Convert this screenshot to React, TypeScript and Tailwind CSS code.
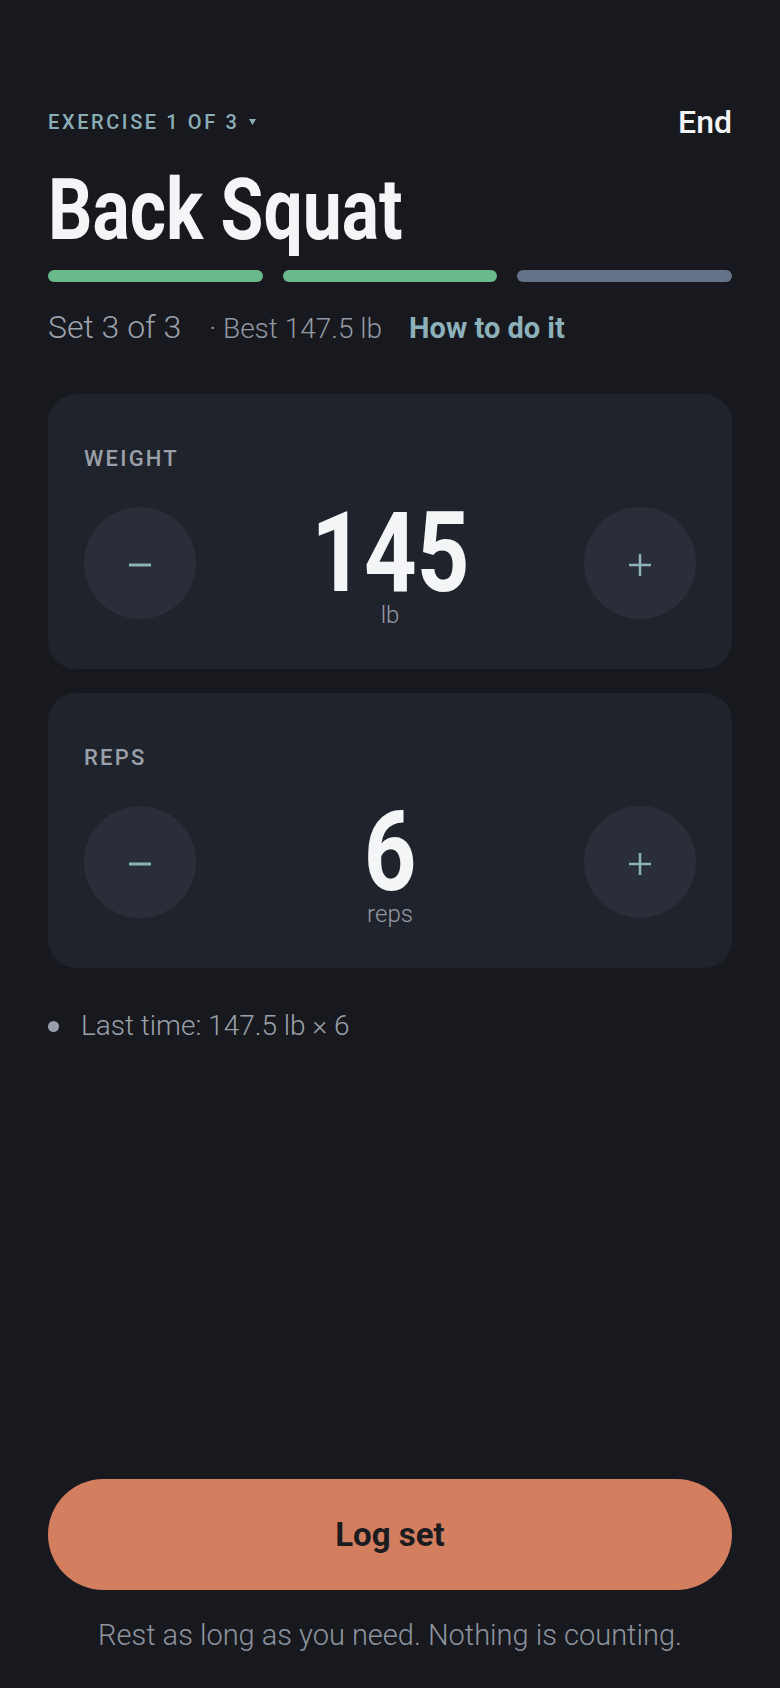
import React from 'react';

const MinusGlyph = () => (
  <svg width="22" height="22" viewBox="0 0 22 22" className="mt-1">
    <line x1="0" y1="11" x2="22" y2="11" stroke="#8db4bd" strokeWidth="3" />
  </svg>
);

const PlusGlyph = () => (
  <svg width="22" height="22" viewBox="0 0 22 22" className="mt-1">
    <line x1="0" y1="11" x2="22" y2="11" stroke="#8db4bd" strokeWidth="2.5" />
    <line x1="11" y1="0" x2="11" y2="22" stroke="#8db4bd" strokeWidth="2.5" />
  </svg>
);

const Stepper: React.FC<{ label: string; value: string; unit: string }> = ({ label, value, unit }) => (
  <div className="rounded-[28px] bg-[#1f232b] px-9 pt-[51px] pb-[42px]">
    <div className="text-[22px] leading-[28px] font-medium tracking-[0.1em] text-[#9aa0aa]">{label}</div>
    <div className="mt-[30px] flex items-start justify-between">
      <button className="mt-1 flex h-28 w-28 items-center justify-center rounded-full bg-[#2a2e38]">
        <MinusGlyph />
      </button>
      <div className="flex flex-col items-center">
        {/* condensed numerals */}
        <div className="inline-block scale-x-[0.82] text-[112px] leading-[100px] font-bold text-[#f4f5f7]">{value}</div>
        <div className="text-[24px] leading-none font-light text-[#959ba6]">{unit}</div>
      </div>
      <button className="mt-1 flex h-28 w-28 items-center justify-center rounded-full bg-[#2a2e38]">
        <PlusGlyph />
      </button>
    </div>
  </div>
);

export default function App() {
  return (
    <div className="flex min-h-screen flex-col bg-[#18191e] px-12 font-['Roboto',sans-serif]">
      {/* header */}
      <div className="mt-[102px] flex h-10 items-center justify-between">
        <button className="flex items-center text-[20px] font-medium tracking-[0.13em] text-[#8aaeb7]">
          EXERCISE 1 OF 3
          <svg width="7" height="6" viewBox="0 0 7 6" className="ml-[10px]">
            <path d="M0 0 H7 L3.5 6 Z" fill="#8aaeb7" />
          </svg>
        </button>
        <button className="text-[32px] leading-10 font-medium text-[#f3f4f6]">End</button>
      </div>

      <h1 className="mt-[25px] origin-left scale-x-[0.81] text-[86px] leading-none font-bold text-[#f4f5f7]">
        Back Squat
      </h1>

      <div className="mt-[17px] grid grid-cols-3 gap-5">
        <div className="h-3 rounded-full bg-[#69b98a]" />
        <div className="h-3 rounded-full bg-[#69b98a]" />
        <div className="h-3 rounded-full bg-[#65728a]" />
      </div>

      <div className="mt-[27px] flex items-baseline leading-9">
        <span className="text-[32px] font-light text-[#9ca2ac]">Set 3 of 3</span>
        <span className="ml-[28px] text-[28px] font-light text-[#9298a3]">· Best 147.5 lb</span>
        <button className="ml-[27px] text-[29px] font-bold text-[#8db1ba]">How to do it</button>
      </div>

      <div className="mt-[47px] flex flex-col gap-6">
        <Stepper label="WEIGHT" value="145" unit="lb" />
        <Stepper label="REPS" value="6" unit="reps" />
      </div>

      <div className="mt-10 flex items-center gap-[22px] leading-9">
        <span className="h-[11px] w-[11px] rounded-full bg-[#9aa0ab]" />
        <span className="text-[28px] font-light text-[#9aa0aa]">Last time: 147.5 lb × 6</span>
      </div>

      <div className="flex-1" />

      <button className="h-[111px] w-full rounded-full bg-[#d37e5e] text-[33px] font-bold text-[#1b1c20]">
        Log set
      </button>
      <p className="mt-[27px] mb-[35px] text-center text-[29px] leading-9 font-light text-[#8e949f]">
        Rest as long as you need. Nothing is counting.
      </p>
    </div>
  );
}
